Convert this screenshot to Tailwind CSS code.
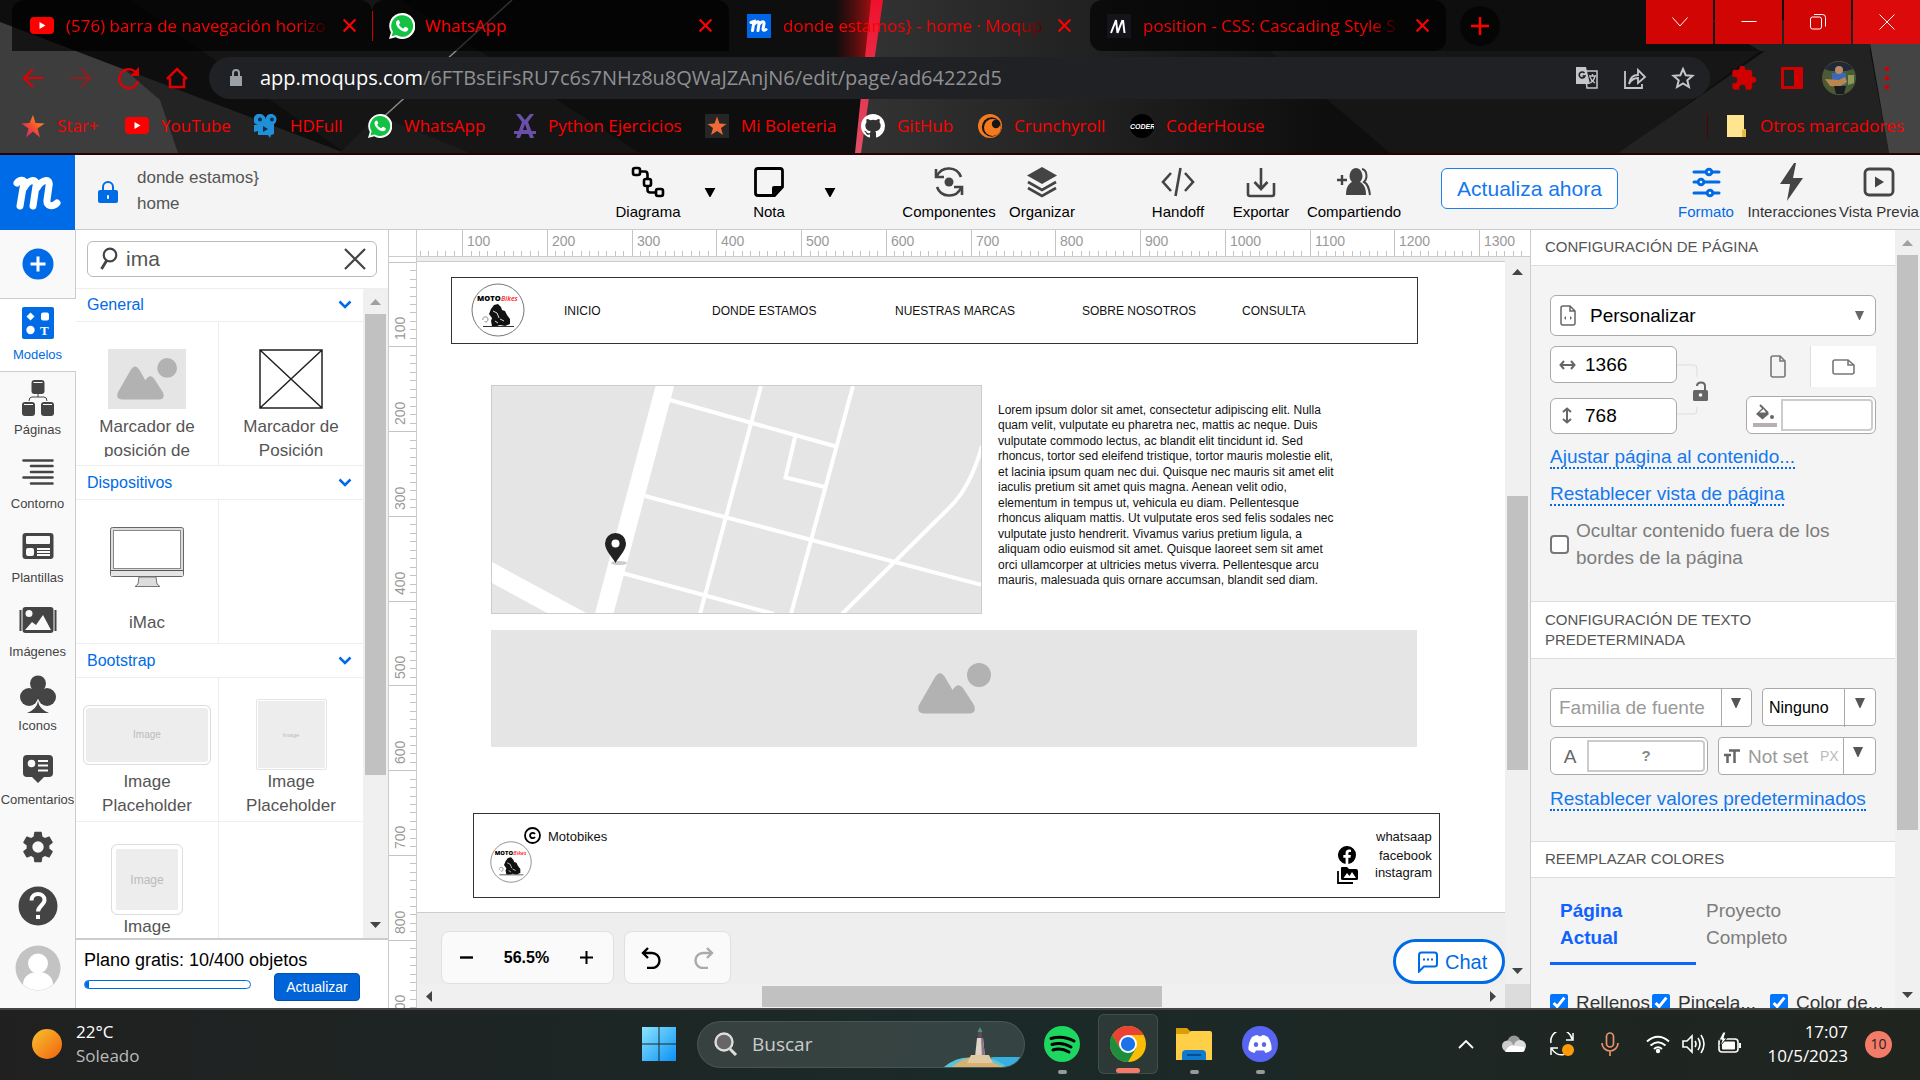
<!DOCTYPE html>
<html lang="es">
<head>
<meta charset="utf-8">
<meta name="viewport" content="width=device-width, initial-scale=1">
<title>donde estamos} - home · Moqups</title>
<script src="https://cdn.jsdelivr.net/npm/@tailwindcss/browser@4"></script>
</head>
<body class="flex h-screen flex-col overflow-hidden bg-[#eee] font-['Liberation_Sans',Arial,sans-serif] text-black">

<!-- Shared symbols -->
<svg class="hidden" aria-hidden="true">
  <symbol id="picture" viewBox="0 0 73 51">
    <path fill="#b2b2b2" d="M1 42 16.500 15Q22 5.500 27.500 15L34.500 27Q40 18.500 45 25L56 42Q59 50.500 51 50.500H7Q-2 50.500 1 42Z"/>
    <circle cx="61" cy="12" r="12" fill="#b2b2b2"/>
  </symbol>
  <symbol id="motologo" viewBox="0 0 54 54">
    <circle cx="27" cy="27" r="26" fill="#fff" stroke="#777" stroke-width="1"/>
    <text x="6" y="18" font-family="Open Sans" font-weight="800" font-size="7.500" fill="#000">MOTO</text>
    <text x="30" y="18" font-family="Open Sans" font-style="italic" font-weight="600" font-size="7" fill="#f22">Bikes</text>
    <path fill="#111" d="M20 26l3-4 4-1 3 3 1 3 3 1 2 4 3 4 0 5-5 2-5-1-3 1-5 0-1-5 1-3-3-4z"/>
    <path fill="none" stroke="#888" stroke-width="1" d="M12 37c-1-4 5-4 5-1s-3 4-3 2"/>
    <path stroke="#333" stroke-width="1" d="M12 43.500h31"/>
    <path fill="none" stroke="#ddd" stroke-width="1" d="M22 28l4 2 2 5M29 36l4 2M24 38l3 2"/>
  </symbol>
  <symbol id="wa" viewBox="0 0 24 24">
    <path fill="#fff" d="M12 0a12 12 0 0 0-10.200 18L0 24l6.200-1.700A12 12 0 1 0 12 0z"/>
    <path fill="#13c143" d="M12 2a10 10 0 0 0-8.400 15.300L2.500 21.500l4.300-1.100A10 10 0 1 0 12 2z"/>
    <path fill="#fff" d="M8.500 6.500c-.5 0-2 .8-2 2.700 0 3.500 4.800 8 8.300 8 2 0 3-1.200 3-2.700 0-.5-2.500-1.800-3-1.700-.5.200-1 1.500-1.500 1.500-1.200 0-4-2.600-4-3.700 0-.5 1-1 1-1.500s-1-2.600-1.800-2.600z"/>
  </symbol>
  <symbol id="yt" viewBox="0 0 24 24"><rect y="3" width="24" height="17" rx="4" fill="#f00"/><path fill="#fff" d="M9.500 8v7l6-3.500z"/></symbol>
  <symbol id="cross" viewBox="0 0 14 14"><path d="M1.500 1.500l11 11M12.500 1.500l-11 11" stroke="currentColor" stroke-width="2" fill="none"/></symbol>
  <symbol id="down" viewBox="0 0 12 10"><path d="M0 0h12L6.500 10h-1z" fill="currentColor"/></symbol>
  <symbol id="chev" viewBox="0 0 14 9"><path d="M1.500 1.500L7 7l5.500-5.500" stroke="#006be6" stroke-width="2.500" fill="none"/></symbol>
</svg>

<!-- Browser -->
<header class="relative shrink-0 overflow-hidden border-b-2 border-[#2a0003] bg-[#0e0e0e] font-['Open_Sans','Noto_Sans',sans-serif] text-[17px] leading-6 text-[#f00]">
  <svg class="absolute inset-0 h-full w-full" viewBox="0 0 1920 153" preserveAspectRatio="none" aria-hidden="true">
    <defs>
      <linearGradient id="glow"><stop offset="0" stop-color="#7a0b0b" stop-opacity="0"/><stop offset="1" stop-color="#a01010"/></linearGradient>
      <linearGradient id="mid"><stop offset="0" stop-color="#333"/><stop offset="1" stop-color="#0e0e0e"/></linearGradient>
      <linearGradient id="beam" x2="0" y2="1"><stop offset="0" stop-color="#f0102c"/><stop offset="1" stop-color="#e05068"/></linearGradient>
    </defs>
    <path fill="#1c1c1c" d="M130 0H400L640 153H345z" opacity=".5"/>
    <path fill="#232323" d="M0 22L345 153H0z"/>
    <path fill="#3d3d3d" d="M0 22L125 70 160 100 178 153H0z"/>
    <path stroke="#8a8a8a" stroke-width="1.500" d="M512 0L378 122"/>
    <path fill="#1c1c1c" d="M378 115L470 153H340z"/>
    <path fill="url(#mid)" d="M875 0H1330V153H860z"/>
    <path fill="url(#glow)" d="M835 0H872L868 57H835z"/>
    <path fill="url(#beam)" d="M871 0H883L861 153H855z"/>
    <path fill="#1d1d1d" d="M1270 51H1760L1620 153H1390z" opacity=".5"/>
    <path fill="#222" d="M1765 51H1870L1889 153H1618z"/>
    <path fill="#222" d="M1710 20H1870V51H1760z"/>
    <path fill="#444" d="M1866 20H1920V153H1889z"/>
  </svg>
  <div class="relative flex h-[51px] items-center">
    <div class="ml-3 flex h-full w-[360px] items-center rounded-t-xl bg-black/65 pl-[18px] pr-[15px]">
      <svg class="size-6"><use href="#yt"/></svg>
      <span class="ml-3 whitespace-nowrap bg-linear-to-r from-[#f00] from-90% to-[#300] bg-clip-text text-transparent">(576) barra de navegación horizo</span>
      <button class="ml-auto" aria-label="Cerrar"><svg class="size-[15px]"><use href="#cross"/></svg></button>
    </div>
    <div class="flex h-full w-[357px] items-center rounded-t-xl bg-black/65 pr-4">
      <span class="h-[30px] w-px bg-[#c00]"></span>
      <svg class="ml-4 size-[26px]"><use href="#wa"/></svg>
      <span class="ml-[10px]">WhatsApp</span>
      <button class="ml-auto" aria-label="Cerrar"><svg class="size-[15px]"><use href="#cross"/></svg></button>
    </div>
    <div class="flex h-full w-[361px] items-center pl-[18px] pr-[18px]">
      <svg class="size-6" viewBox="0 0 24 24"><rect width="24" height="24" fill="#0066e8"/><path fill="none" stroke="#fff" stroke-width="3" stroke-linecap="round" d="M4 8.500l3-1-1.500 9M7.500 10c2-3 5-3 4.500 0l-1 6.500M12.500 10c2-3 5-3 4.500 0l-1 5c0 1.500 2 1.500 3 .5"/></svg>
      <span class="ml-3 whitespace-nowrap bg-linear-to-r from-[#f00] from-90% to-[#500] bg-clip-text text-transparent">donde estamos} - home · Moqup</span>
      <button class="ml-auto" aria-label="Cerrar"><svg class="size-[15px]"><use href="#cross"/></svg></button>
    </div>
    <div class="flex h-full w-[356px] items-center rounded-xl bg-black/65 pl-[17px] pr-4">
      <svg class="size-6" viewBox="0 0 24 24"><rect width="24" height="24" fill="#15141a"/><path fill="none" stroke="#fff" stroke-width="2" d="M4 19L9 6l1.500 13L15.500 6M16 6l1.500 13M15 19"/></svg>
      <span class="ml-3 whitespace-nowrap bg-linear-to-r from-[#f00] from-90% to-[#300] bg-clip-text text-transparent">position - CSS: Cascading Style S</span>
      <button class="ml-auto" aria-label="Cerrar"><svg class="size-[15px]"><use href="#cross"/></svg></button>
    </div>
    <button class="ml-[14px] grid size-10 place-items-center rounded-full bg-black/60" aria-label="Nueva pestaña"><svg class="size-[18px]" viewBox="0 0 18 18"><path d="M9 0v18M0 9h18" stroke="#f00" stroke-width="2.500"/></svg></button>
    <div class="ml-auto flex gap-[2px] self-start">
      <button class="grid h-11 w-[67px] place-items-center bg-[#d20505]" aria-label="Buscar pestañas"><svg class="size-4" viewBox="0 0 16 16"><path d="M.5 3.500L8 12l7.500-8.500" stroke="#fff" fill="none"/></svg></button>
      <button class="grid h-11 w-[67px] place-items-center bg-[#d20505]" aria-label="Minimizar"><svg class="size-4" viewBox="0 0 16 16"><path d="M.5 7.500h15" stroke="#fff"/></svg></button>
      <button class="grid h-11 w-[67px] place-items-center bg-[#d20505]" aria-label="Restaurar"><svg class="size-4" viewBox="0 0 16 16"><rect x=".5" y="3" width="11" height="12" rx="2" fill="none" stroke="#fff"/><path d="M4 .5h8.500a3 3 0 0 1 3 3v9" fill="none" stroke="#fff"/></svg></button>
      <button class="grid h-11 w-[67px] place-items-center bg-[#dc0a0a]" aria-label="Cerrar ventana"><svg class="size-4" viewBox="0 0 16 16"><path d="M.5.5l15 15M15.500.5l-15 15" stroke="#fff"/></svg></button>
    </div>
  </div>
  <div class="relative flex h-[54px] items-center pl-[21px] pr-[21px]">
    <div class="flex items-center gap-6 text-[#e00000]">
      <button aria-label="Atrás"><svg class="size-6" viewBox="0 0 24 24"><path d="M22 12H3M12 3l-9 9 9 9" stroke="currentColor" stroke-width="2.200" fill="none"/></svg></button>
      <button class="opacity-50" aria-label="Adelante"><svg class="size-6" viewBox="0 0 24 24"><path d="M2 12h19M12 3l9 9-9 9" stroke="currentColor" stroke-width="2.200" fill="none"/></svg></button>
      <button aria-label="Recargar"><svg class="size-6" viewBox="0 0 24 24"><path d="M20 8a9.500 9.500 0 1 0 1 7" stroke="currentColor" stroke-width="2.400" fill="none"/><path d="M22 1v9h-9z" fill="currentColor"/></svg></button>
      <button aria-label="Inicio"><svg class="size-6" viewBox="0 0 24 24"><path d="M5 12v9h14v-9M2 13L12 3l10 10" stroke="currentColor" stroke-width="2.500" fill="none"/></svg></button>
    </div>
    <div class="ml-5 flex h-[42px] flex-1 items-center rounded-full bg-[#202124] pl-[18px] pr-[15px]">
      <svg class="h-[18px] w-[18px]" viewBox="0 0 18 18"><path d="M3 7h12v10H3z" fill="#9aa0a6"/><path d="M6 8V4a3 3 0 0 1 6 0v4" stroke="#9aa0a6" stroke-width="2" fill="none"/></svg>
      <div class="ml-[15px] flex-1 text-[20px] text-[#8f9092]" role="textbox" aria-label="Dirección"><span class="text-white">app.moqups.com</span>/6FTBsEiFsRU7c6s7NHz8u8QWaJZAnjN6/edit/page/ad64222d5</div>
      <div class="flex items-center gap-6 text-[#c4c6c8]">
        <button aria-label="Traducir"><svg class="size-6" viewBox="0 0 24 24"><path d="M10 5h12v17H12z" fill="none" stroke="currentColor" stroke-width="1.500"/><path d="M1 1h10l4 17H1z" fill="currentColor"/><path d="M9.500 7A3 3 0 1 0 10 10H7.500" stroke="#202124" stroke-width="1.600" fill="none"/><path d="M14 10h7M17.500 8v2M20 10c-1 4-3 6-5 7M15 11c1 3 3 5 5 6" stroke="currentColor" stroke-width="1.300" fill="none"/></svg></button>
        <button aria-label="Compartir"><svg class="size-6" viewBox="0 0 24 24"><path d="M2 5v17h17v-4" stroke="currentColor" stroke-width="1.800" fill="none"/><path d="M6 18c1-7 5-9 9-9V4l7 7-7 6v-5c-4 0-7 2-9 6z" stroke="currentColor" stroke-width="1.800" fill="none"/></svg></button>
        <button aria-label="Favorito"><svg class="size-6" viewBox="0 0 24 24"><path d="M12 3l2.700 6.200 6.800.6-5.200 4.500 1.600 6.700-5.900-3.600L6.100 21l1.600-6.700L2.500 9.800l6.800-.6z" stroke="currentColor" stroke-width="2" fill="none"/></svg></button>
      </div>
    </div>
    <div class="ml-5 flex items-center text-[#d00000]">
      <button aria-label="Extensiones"><svg class="size-7" viewBox="0 0 24 24"><path fill="currentColor" d="M20 11h-1V7c0-1-1-2-2-2h-4V4a2.500 2.500 0 0 0-5 0v1H4c-1 0-2 1-2 2v4h1.500a2.700 2.700 0 0 1 0 5.400H2V20c0 1 1 2 2 2h4v-1.500a2.700 2.700 0 0 1 5.400 0V22H17c1 0 2-1 2-2v-4h1a2.500 2.500 0 0 0 0-5z"/></svg></button>
      <button class="ml-[22px]" aria-label="Panel lateral"><svg class="size-6" viewBox="0 0 24 24"><path fill="currentColor" fill-rule="evenodd" d="M1 1h22v22H1zM4 4v16h10V4z"/></svg></button>
      <button class="ml-[18px]" aria-label="Perfil"><svg class="size-[34px]" viewBox="0 0 34 34"><circle cx="17" cy="17" r="17" fill="#4a5a34"/><path fill="#20283a" d="M3 8A17 17 0 0 1 31 8L24 10H8z"/><path fill="#3a68b8" d="M10 12h14v12H10z"/><circle cx="17" cy="9" r="4" fill="#b98a6a"/><path fill="#b98650" d="M3 18l14 1 6-3 2 5-8 5-9-1z"/><path fill="#1a1c22" d="M12 25h12l-2 8h-8z"/><path fill="#8c9a5a" d="M26 14l6 0 0 8-6 2z"/></svg></button>
      <button class="ml-[19px]" aria-label="Menú"><svg class="size-6" viewBox="0 0 24 24"><circle cx="12" cy="3" r="2.300" fill="currentColor"/><circle cx="12" cy="12" r="2.300" fill="currentColor"/><circle cx="12" cy="21" r="2.300" fill="currentColor"/></svg></button>
    </div>
  </div>
  <nav class="relative flex h-12 items-center pb-[6px] pl-[21px] pr-4" aria-label="Marcadores">
    <a href="#" class="flex w-[104px] items-center gap-3"><svg class="size-6 shrink-0" viewBox="0 0 24 24"><defs><linearGradient id="star" x1="0" y1="1" x2="1" y2="0"><stop offset="0" stop-color="#c81a8a"/><stop offset=".5" stop-color="#f5502a"/><stop offset="1" stop-color="#ffb030"/></linearGradient></defs><path fill="url(#star)" d="M12 1l2.500 8 9 .5-7 5 2.500 9-7-6-7 6 2.500-9-7-5 8-.5z"/></svg>Star+</a>
    <a href="#" class="flex w-[129px] items-center gap-3"><svg class="size-6 shrink-0"><use href="#yt"/></svg>YouTube</a>
    <a href="#" class="flex w-[114px] items-center gap-3"><svg class="size-6 shrink-0" viewBox="0 0 24 24"><path fill="#2090d8" d="M6 0a5.500 5.500 0 0 1 5.500 5A5.500 5.500 0 1 1 20 10v10l-3 1-1 3-2-3H4v-4l-4 1v-7h4A5.500 5.500 0 0 1 6 0z"/><circle cx="6" cy="5.500" r="2" fill="#0c3050"/><circle cx="18" cy="5.500" r="2" fill="#0c3050"/><path fill="#0c3050" d="M9 12v6l5-3z"/></svg>HDFull</a>
    <a href="#" class="flex w-[145px] items-center gap-3"><svg class="size-6 shrink-0"><use href="#wa"/></svg>WhatsApp</a>
    <a href="#" class="flex w-[192px] items-center gap-[11px]"><svg class="size-6 shrink-0" viewBox="0 0 24 24"><path fill="#6a4fa8" d="M3 0h4l5 6 5-6h4l-6 8 6 16h-4l-2-5H9l-2 5H3L9 8zM12 10l-2 6h4z"/><path fill="#6a4fa8" d="M1 17h22v3H1z"/></svg>Python Ejercicios</a>
    <a href="#" class="flex w-[156px] items-center gap-3"><svg class="size-6 shrink-0" viewBox="0 0 24 24"><rect width="24" height="24" fill="#262626"/><path fill="#f06a38" d="M12 2.500l2.500 7 7 .5-5.500 4 2 7-6-4-6 4 2-7L2.500 10l7-.5z"/></svg>Mi Boleteria</a>
    <a href="#" class="flex w-[117px] items-center gap-3"><svg class="size-6 shrink-0" viewBox="0 0 16 16"><path fill="#fff" d="M8 0C3.580 0 0 3.580 0 8c0 3.540 2.290 6.530 5.470 7.590.4.070.55-.17.55-.38 0-.19-.01-.82-.01-1.490-2.010.37-2.530-.49-2.690-.94-.09-.23-.48-.94-.82-1.130-.28-.15-.68-.52-.01-.53.63-.01 1.080.58 1.230.82.720 1.210 1.870.87 2.330.66.070-.52.280-.87.510-1.070-1.780-.2-3.640-.89-3.640-3.950 0-.87.310-1.590.82-2.150-.08-.2-.36-1.020.08-2.120 0 0 .67-.21 2.200.82a7.500 7.500 0 0 1 4 0c1.530-1.040 2.200-.82 2.200-.82.44 1.100.16 1.920.08 2.120.51.56.82 1.270.82 2.150 0 3.070-1.870 3.750-3.650 3.950.29.25.54.73.54 1.480 0 1.070-.01 1.930-.01 2.200 0 .21.15.46.55.38A8 8 0 0 0 16 8c0-4.420-3.580-8-8-8z"/></svg>GitHub</a>
    <a href="#" class="flex w-[152px] items-center gap-3"><svg class="size-6 shrink-0" viewBox="0 0 24 24"><circle cx="12" cy="12" r="12" fill="#f47a20"/><circle cx="13.500" cy="13" r="9.700" fill="#151515"/><circle cx="14.500" cy="13.500" r="8.500" fill="#f47a20"/><circle cx="18" cy="10" r="4.200" fill="#151515"/></svg>Crunchyroll</a>
    <a href="#" class="flex items-center gap-3"><svg class="size-6 shrink-0" viewBox="0 0 24 24"><circle cx="12" cy="12" r="12" fill="#000"/><text x="0" y="15" font-family="Liberation Sans Narrow, Liberation Sans" font-size="7" font-weight="700" font-style="italic" fill="#fff">CODER</text></svg>CoderHouse</a>
    <a href="#" class="ml-auto flex items-center border-l border-[#500] pl-[19px]"><svg class="h-[22px] w-[19px]" viewBox="0 0 19 22"><path fill="#ffe58f" d="M0 0h17v14l2 1v7H0z"/><path fill="#e8b93a" d="M15 15l4-1v8h-4z"/></svg><span class="ml-[14px]">Otros marcadores</span></a>
  </nav>
</header>

<!-- Moqups toolbar -->
<div class="flex h-[75px] shrink-0 border-b border-[#ccc] bg-[#f4f4f4] text-[15px] leading-[18px]">
  <button class="grid h-[75px] w-[75px] place-items-center bg-[#006be6]" aria-label="Moqups"><svg class="h-[34px] w-[50px]" viewBox="0 0 50 34"><path fill="none" stroke="#fff" stroke-width="7" stroke-linecap="round" stroke-linejoin="round" d="M4 7c2-3 7-4 7-1L7 30M11 12c4-8 13-11 12-2L20 30M24 12c4-8 14-11 12-2l-2 14c-1 7 6 7 10 3"/></svg></button>
  <div class="flex flex-1 items-center pl-[23px] text-[17px] leading-[26px] text-[#555]">
    <svg class="h-[22px] w-5" viewBox="0 0 20 22"><path fill="#006be6" d="M2 9h16q2 0 2 2v9q0 2-2 2H2q-2 0-2-2v-9q0-2 2-2z"/><path d="M5 10V6a5 5 0 0 1 10 0v4" stroke="#006be6" stroke-width="2" fill="none"/><rect x="9" y="14" width="2" height="4" rx="1" fill="#fff"/></svg>
    <div class="ml-[19px] pb-[2px]"><p>donde estamos}</p><p>home</p></div>
  </div>
  <button class="flex w-[66px] flex-col items-center pt-[10px]"><svg class="size-[34px]" viewBox="0 0 34 34" fill="none" stroke="#000" stroke-width="2.600"><rect x="2" y="3" width="7" height="7" rx="2"/><rect x="13" y="14" width="7" height="7" rx="2"/><rect x="25" y="24" width="7" height="7" rx="2"/><path d="M9 6.500h5q2.500 0 2.500 3V14M16.500 21v4q0 2.500 3 2.500H25"/></svg><span class="mt-[4px]">Diagrama</span></button>
  <button class="ml-4 w-6 pl-[7px]" aria-label="Más diagramas"><svg class="h-[9px] w-3"><use href="#down"/></svg></button>
  <button class="ml-6 flex w-12 flex-col items-center pt-[10px]"><svg class="size-[34px]" viewBox="0 0 34 34"><path d="M3.500 6q0-2.500 2.500-2.500h22q2.500 0 2.500 2.500v16l-8 8.500H6q-2.500 0-2.500-2.500z" fill="none" stroke="#000" stroke-width="2.800"/><path d="M20 31v-8q0-2 2-2h9z"/></svg><span class="mt-[4px]">Nota</span></button>
  <button class="ml-6 w-6 pl-[7px]" aria-label="Más notas"><svg class="h-[9px] w-3"><use href="#down"/></svg></button>
  <button class="ml-[60px] flex w-24 flex-col items-center pt-[10px]"><svg class="size-[34px]" viewBox="0 0 34 34" fill="none" stroke="#444" stroke-width="2.600"><circle cx="17" cy="17" r="4.500" fill="#444" stroke="none"/><path d="M5 11A13 13 0 0 1 29 12M29 23A13 13 0 0 1 5 22"/><path d="M4 4v8h8M30 30v-8h-8"/></svg><span class="mt-[4px]">Componentes</span></button>
  <button class="ml-[10px] flex w-[70px] flex-col items-center pt-[10px]"><svg class="size-[34px]" viewBox="0 0 34 34"><path d="M17 2l15 8.500L17 19 2 10.500z" fill="#444"/><path d="M3 17l14 8 14-8M3 23l14 8 14-8" fill="none" stroke="#444" stroke-width="2.600"/></svg><span class="mt-[4px]">Organizar</span></button>
  <button class="ml-[73px] flex w-14 flex-col items-center pt-[10px]"><svg class="size-[34px]" viewBox="0 0 34 34" fill="none" stroke="#444" stroke-width="2.600"><path d="M10 8l-8 9 8 9M24 8l8 9-8 9M19.500 3l-5 28"/></svg><span class="mt-[4px]">Handoff</span></button>
  <button class="ml-[25px] flex w-[60px] flex-col items-center pt-[10px]"><svg class="size-[34px]" viewBox="0 0 34 34" fill="none" stroke="#444" stroke-width="2.600"><path d="M17 3v20M10.500 17l6.500 7 6.500-7M4 18v11q0 2 2 2h22q2 0 2-2V18"/></svg><span class="mt-[4px]">Exportar</span></button>
  <button class="ml-[15px] flex w-24 flex-col items-center pt-[10px]"><svg class="size-[34px]" viewBox="0 0 34 34"><path d="M0 15h10M5 10v10" stroke="#444" stroke-width="2.400"/><path fill="#444" d="M19 3a7 8 0 0 1 4 14c4 2 6 6 6 13H9c0-7 2-11 6-13a7 8 0 0 1 4-14z"/><path fill="none" stroke="#444" stroke-width="2" d="M25 4c5 1 6 9 2 13 4 2 5 6 6 13"/></svg><span class="mt-[4px]">Compartiendo</span></button>
  <button class="ml-[39px] mt-[13px] h-[41px] w-[177px] whitespace-nowrap rounded-md border border-[#1a7ff0] bg-white text-[21px] leading-6 text-[#1478ee]">Actualiza ahora</button>
  <button class="ml-[58px] flex w-[60px] flex-col items-center pt-[10px] text-[#006be6]"><svg class="size-[34px]" viewBox="0 0 34 34" fill="#f4f4f4" stroke="#006be6" stroke-width="3" stroke-linecap="round"><path d="M5 7h25M5 17h25M5 28h25"/><circle cx="20" cy="7" r="2.800"/><circle cx="12" cy="17" r="2.800"/><circle cx="21" cy="28" r="2.800"/></svg><span class="mt-[4px]">Formato</span></button>
  <button class="ml-[10px] flex w-[92px] flex-col items-center pt-[8px] text-[#333]"><svg class="h-[38px] w-[30px]" viewBox="0 0 30 38"><path fill="#444" d="M17 0L3 21h10l-3 17 16-23H16l3-15z"/></svg><span class="mt-[2px]">Interacciones</span></button>
  <button class="flex w-[82px] flex-col items-center pt-[10px] text-[#333]"><svg class="size-[34px]" viewBox="0 0 34 34"><rect x="3" y="4" width="28" height="26" rx="4" fill="none" stroke="#444" stroke-width="2.800"/><path fill="#444" d="M13 11.500v11l9-5.500z"/></svg><span class="mt-[4px] whitespace-nowrap">Vista Previa</span></button>
</div>

<main class="flex min-h-0 flex-1">
  <!-- Rail -->
  <nav class="flex w-[76px] shrink-0 flex-col border-r border-[#ccc] bg-[#f9f9f9] text-[13px] leading-4 text-[#444]">
    <button class="grid h-[69px] w-[75px] shrink-0 place-items-center border-b border-[#ccc]" aria-label="Añadir"><svg class="size-8" viewBox="0 0 32 32"><circle cx="16" cy="16" r="15.500" fill="#006be6"/><path d="M16 8.500v15M8.500 16h15" stroke="#fff" stroke-width="3"/></svg></button>
    <button class="flex h-[73px] w-[76px] shrink-0 flex-col items-center gap-[5px] border-b border-[#ccc] bg-white pr-px pt-[5px] text-[#006be6]"><svg class="size-[38px]" viewBox="0 0 38 38"><rect x="3" y="3" width="32" height="32" rx="2" fill="#006be6"/><path fill="#fff" d="M11.500 8.500l4 4-4 4-4-4z"/><rect x="22" y="8.500" width="8" height="8" rx="2" fill="#fff"/><circle cx="11.500" cy="26" r="4.200" fill="#fff"/><text x="21" y="30.500" font-family="Liberation Serif" font-size="13" font-weight="700" fill="#fff">T</text></svg>Modelos</button>
    <button class="flex h-[74px] shrink-0 flex-col items-center gap-[5px] pt-[7px]"><svg class="size-[38px]" viewBox="0 0 38 38"><rect x="12.500" y="1" width="13" height="14" rx="3" fill="#444"/><rect x="3" y="23" width="13" height="14" rx="3" fill="#444"/><rect x="22" y="23" width="13" height="14" rx="3" fill="#444"/><path d="M14.500 3.500h9M5 25.500h9M24 25.500h9" stroke="#f9f9f9"/><path d="M19 15v3M10 22q0-4 3-4h12q3 0 3 4" stroke="#444" fill="none"/></svg>Páginas</button>
    <button class="flex h-[74px] shrink-0 flex-col items-center gap-[5px] pt-[7px]"><svg class="size-[38px]" viewBox="0 0 38 38"><path d="M4.500 7.500h29M12 13h21.500M12 19h21.500M4.500 24.500h29M12 30.500h21.500" stroke="#444" stroke-width="2.600" stroke-linecap="round"/></svg>Contorno</button>
    <button class="flex h-[74px] shrink-0 flex-col items-center gap-[5px] pt-[7px]"><svg class="size-[38px]" viewBox="0 0 38 38"><rect x="3.500" y="6" width="31" height="26" rx="3" fill="#444"/><g fill="#f9f9f9"><rect x="7" y="9" width="24" height="8" rx="1"/><rect x="7" y="21" width="8" height="8" rx="2"/><path d="M18 21h13v2H18zM18 24h13v2H18zM18 27h13v2H18z"/></g></svg>Plantillas</button>
    <button class="flex h-[74px] shrink-0 flex-col items-center gap-[5px] pt-[7px]"><svg class="size-[38px]" viewBox="0 0 38 38"><rect x="3.500" y="6" width="31" height="26" rx="3" fill="#444"/><path d="M1.500 9v21M36.500 9v21" stroke="#444" stroke-width="2"/><circle cx="10" cy="12.500" r="3.500" fill="#f9f9f9"/><path fill="#f9f9f9" d="M6 29l7-8 4 3 7-10 8 15z"/></svg>Imágenes</button>
    <button class="flex h-[74px] shrink-0 flex-col items-center gap-[5px] pt-[7px]"><svg class="size-[38px]" viewBox="0 0 38 38" fill="#444"><circle cx="19" cy="8.500" r="8"/><circle cx="10" cy="22" r="9"/><circle cx="28" cy="22" r="9"/><path d="M16 14h6v10h-6zM19 26q1 8 11 12H8q10-4 11-12z"/></svg>Iconos</button>
    <button class="flex h-[74px] shrink-0 flex-col items-center gap-[5px] whitespace-nowrap pt-[7px]"><svg class="size-[38px]" viewBox="0 0 38 38"><path fill="#444" d="M8 6h22q4 0 4 4v14q0 4-4 4h-5l-6 6-6-6H8q-4 0-4-4V10q0-4 4-4z"/><circle cx="12.500" cy="14.500" r="3.800" fill="#f9f9f9"/><path d="M19 12h10M19 16.500h10M19 21.500h10" stroke="#f9f9f9" stroke-width="2"/></svg>Comentarios</button>
    <button class="grid h-[62px] shrink-0 place-items-center" aria-label="Ajustes"><svg class="size-[38px]" viewBox="0 0 24 24"><path fill="#444" d="M19.140 12.940c.04-.3.060-.61.060-.94 0-.32-.02-.64-.07-.94l2.030-1.580c.18-.14.230-.41.120-.61l-1.920-3.320c-.12-.22-.37-.29-.59-.22l-2.390.96c-.5-.38-1.030-.7-1.620-.94l-.36-2.540c-.04-.24-.24-.41-.48-.41h-3.840c-.24 0-.43.17-.47.41l-.36 2.540c-.59.24-1.130.57-1.620.94l-2.390-.96c-.22-.08-.47 0-.59.22L2.740 8.870c-.12.21-.08.47.12.61l2.030 1.580c-.05.3-.09.63-.09.94s.02.64.07.94l-2.030 1.580c-.18.14-.23.41-.12.61l1.920 3.320c.12.22.37.290.59.22l2.390-.96c.5.38 1.030.7 1.620.94l.36 2.540c.05.24.24.41.48.41h3.840c.24 0 .44-.17.470-.41l.36-2.540c.59-.24 1.130-.56 1.620-.94l2.390.96c.22.08.47 0 .59-.22l1.920-3.320c.12-.22.070-.47-.12-.61l-2.010-1.580zM12 15.600A3.600 3.600 0 1 1 12 8.400a3.600 3.600 0 0 1 0 7.200z"/></svg></button>
    <button class="grid h-14 shrink-0 place-items-center" aria-label="Ayuda"><svg class="size-[40px]" viewBox="0 0 40 40"><circle cx="20" cy="20" r="19.500" fill="#444"/><path d="M13.500 14.500c0-9 13-8.500 13-.5 0 5-6.500 6-6.500 11.500" stroke="#fff" stroke-width="4" fill="none"/><path fill="#fff" d="M18 29h4v4h-4z"/></svg></button>
    <button class="grid h-[68px] shrink-0 place-items-center" aria-label="Cuenta"><svg class="size-[46px]" viewBox="0 0 46 46"><circle cx="23" cy="23" r="22.500" fill="#c3c3c3"/><circle cx="23" cy="18.500" r="10" fill="#fff"/><path fill="#fff" d="M8 39.500C8 32 14 28 19 27.500h8c5 .5 11 4.500 11 12A22.500 22.500 0 0 1 8 39.500z"/></svg></button>
  </nav>

  <!-- Stencils -->
  <section class="flex w-[313px] shrink-0 flex-col border-r border-[#ccc] bg-white">
    <div class="border-b border-[#eee] px-[11px] pb-[11px] pt-[11px]">
      <label class="flex h-9 items-center rounded-md border border-[#bbb] pl-3 pr-[10px]">
        <svg class="h-6 w-[18px]" viewBox="0 0 18 24"><circle cx="10" cy="8" r="6.300" fill="none" stroke="#444" stroke-width="2.200"/><path d="M7 13l-5.500 9" stroke="#444" stroke-width="2.800"/></svg>
        <input class="ml-2 w-0 flex-1 text-[21px] leading-7 text-[#555] outline-none" value="ima" aria-label="Buscar modelos">
        <button aria-label="Borrar"><svg class="size-[22px]" viewBox="0 0 22 22"><path d="M1 1l20 20M21 1L1 21" stroke="#444" stroke-width="2.200"/></svg></button>
      </label>
    </div>
    <div class="flex min-h-0 flex-1 text-[17px] leading-6 text-[#555]">
      <div class="flex-1 overflow-hidden">
        <button class="flex h-[33px] w-full items-center justify-between border-b border-[#eee] pb-px pl-[11px] pr-[11px] text-[16px] text-[#006be6]">General<svg class="h-[9px] w-[14px]"><use href="#chev"/></svg></button>
        <div class="grid h-[144px] grid-cols-[143px_1fr] border-b border-[#eee] text-center">
          <div class="flex flex-col items-center border-r border-[#eee] pt-[27px]"><div class="grid h-[60px] w-[78px] place-items-center bg-[#e5e5e5]"><svg class="h-[42px] w-[60px]"><use href="#picture"/></svg></div><div class="mt-[6px] h-[42px] w-[110px] overflow-hidden">Marcador de posición de</div></div>
          <div class="flex flex-col items-center pt-[27px]"><svg class="h-[60px] w-16" viewBox="0 0 64 60"><path d="M1 1h62v58H1zL63 59M63 1L1 59" fill="none" stroke="#222" stroke-width="1.500"/></svg><div class="mt-[6px] h-[42px] w-[110px] overflow-hidden">Marcador de Posición</div></div>
        </div>
        <button class="flex h-[34px] w-full items-center justify-between border-b border-[#eee] pl-[11px] pr-[11px] text-[16px] text-[#006be6]">Dispositivos<svg class="h-[9px] w-[14px]"><use href="#chev"/></svg></button>
        <div class="grid h-[144px] grid-cols-[143px_1fr] border-b border-[#eee] text-center">
          <div class="flex flex-col items-center border-r border-[#eee] pt-[27px]"><svg class="h-[60px] w-[74px]" viewBox="0 0 74 60"><rect x=".5" y=".5" width="73" height="49" rx="2" fill="#ddd" stroke="#666"/><rect x="3.500" y="3.500" width="67" height="38" fill="#fff" stroke="#888"/><path d="M1 43.500h72" stroke="#555"/><path d="M1 44h72v5H1z" fill="#e5e5e5"/><path fill="#ddd" stroke="#777" d="M29 50h17l1 7 3 2.500H25l3-2.500z"/></svg><div class="mt-6">iMac</div></div>
        </div>
        <button class="flex h-[34px] w-full items-center justify-between border-b border-[#eee] pl-[11px] pr-[11px] text-[16px] text-[#006be6]">Bootstrap<svg class="h-[9px] w-[14px]"><use href="#chev"/></svg></button>
        <div class="grid h-[144px] grid-cols-[143px_1fr] border-b border-[#eee] text-center">
          <div class="flex flex-col items-center border-r border-[#eee] pt-[27px]"><div class="grid h-[60px] w-32 place-items-center rounded-md border border-[#ddd] bg-[#ededed] text-[10px] text-[#bbb] ring-2 ring-inset ring-white">Image</div><div class="mt-[5px] w-[110px]">Image Placeholder</div></div>
          <div class="flex flex-col items-center pt-[21px]"><div class="grid size-[71px] place-items-center rounded-xs border border-[#e5e5e5] bg-[#ededed] text-[6px] text-[#bbb] ring-1 ring-inset ring-white">Image</div><div class="w-[110px]">Image Placeholder</div></div>
        </div>
        <div class="grid h-[144px] grid-cols-[143px_1fr] text-center">
          <div class="flex flex-col items-center border-r border-[#eee] pt-[22px]"><div class="grid h-[71px] w-[72px] place-items-center rounded-md border border-[#ddd] bg-[#ededed] text-[12px] text-[#bbb] ring-4 ring-inset ring-white">Image</div><div>Image</div></div>
        </div>
      </div>
      <div class="flex w-[25px] flex-col items-center bg-[#f0f0f0] py-[10px]">
        <svg class="h-[6px] w-[11px]" viewBox="0 0 11 6"><path fill="#a0a0a0" d="M0 6h11L5.500 0z"/></svg>
        <div class="mt-[9px] h-[461px] w-[21px] bg-[#c1c1c1]"></div>
        <svg class="mt-auto h-[6px] w-[11px] rotate-180" viewBox="0 0 11 6"><path fill="#444" d="M0 6h11L5.500 0z"/></svg>
      </div>
    </div>
    <div class="h-[70px] border-t-2 border-[#ccc] pl-2 pt-[9px]">
      <p class="text-[18px] leading-[22px]">Plano gratis: 10/400 objetos</p>
      <div class="flex items-center">
        <div class="mb-1 h-[9px] w-[167px] overflow-hidden rounded-full border border-[#006be6]"><div class="h-full w-1 bg-[#006be6]"></div></div>
        <button class="ml-[23px] mt-[2px] h-7 w-[86px] rounded-sm border border-[#0052b0] bg-[#0063d8] text-[14px] leading-5 text-white">Actualizar</button>
      </div>
    </div>
  </section>

  <!-- Workspace -->
  <section class="grid min-w-0 flex-1 grid-cols-[28px_minmax(0,1fr)_25px] grid-rows-[27px_minmax(0,1fr)_24px] bg-[#eee]">
    <div class="border-b border-r border-[#ccc] bg-white"></div>
    <svg id="ruler-x" class="col-span-2 h-full w-full overflow-hidden border-b border-[#ccc] bg-white" font-size="14" fill="#999"></svg>
    <svg id="ruler-y" class="row-span-2 h-full w-full overflow-hidden border-r border-[#ccc] bg-white" font-size="14" fill="#999"></svg>

    <div class="relative overflow-hidden">
      <div class="absolute inset-x-0 top-[4px] h-[652px] border-y border-[#ccc] bg-white"></div>
      <div class="absolute left-[34px] top-5 h-[67px] w-[967px] border border-[#333]"></div>
      <svg class="absolute left-[54px] top-[26px] size-[54px]"><use href="#motologo"/></svg>
      <a href="#" class="absolute left-[147px] top-[46px] text-[12px] leading-4 text-[#111]">INICIO</a>
      <a href="#" class="absolute left-[295px] top-[46px] text-[12px] leading-4 text-[#111]">DONDE ESTAMOS</a>
      <a href="#" class="absolute left-[478px] top-[46px] text-[12px] leading-4 text-[#111]">NUESTRAS MARCAS</a>
      <a href="#" class="absolute left-[665px] top-[46px] text-[12px] leading-4 text-[#111]">SOBRE NOSOTROS</a>
      <a href="#" class="absolute left-[825px] top-[46px] text-[12px] leading-4 text-[#111]">CONSULTA</a>
      <svg class="absolute left-[74px] top-[128px] h-[229px] w-[491px] border border-[#ccc] bg-[#e5e5e5]" viewBox="0 0 489 227">
        <g fill="none" stroke="#fff" stroke-width="4">
          <path d="M174.500-6L110.500 234" stroke-width="18"/>
          <path d="M178 14L344 60.500M153 110L490 199M130 187L282 228M269 0L208 228M361 0L299 228M303.500 49L293.500 91.500 333 101"/>
          <path d="M490 60Q480 96 462 117L350 228"/>
        </g>
        <path fill="#fff" d="M0 176L96 228H57L0 197z"/>
        <ellipse cx="127" cy="177" rx="8" ry="2" fill="#ccc"/>
        <path fill="#222" d="M123.500 147a10.500 10.500 0 0 1 10.500 10.500c0 7-7 13-10.500 19.500-3.500-6.500-10.500-12.500-10.500-19.500A10.500 10.500 0 0 1 123.500 147z"/>
        <circle cx="123.500" cy="157.500" r="4" fill="#fff"/>
      </svg>
      <p class="absolute left-[581px] top-[146px] whitespace-nowrap text-[12px] leading-[1.29] text-[#111]">Lorem ipsum dolor sit amet, consectetur adipiscing elit. Nulla<br>quam velit, vulputate eu pharetra nec, mattis ac neque. Duis<br>vulputate commodo lectus, ac blandit elit tincidunt id. Sed<br>rhoncus, tortor sed eleifend tristique, tortor mauris molestie elit,<br>et lacinia ipsum quam nec dui. Quisque nec mauris sit amet elit<br>iaculis pretium sit amet quis magna. Aenean velit odio,<br>elementum in tempus ut, vehicula eu diam. Pellentesque<br>rhoncus aliquam mattis. Ut vulputate eros sed felis sodales nec<br>vulputate justo hendrerit. Vivamus varius pretium ligula, a<br>aliquam odio euismod sit amet. Quisque laoreet sem sit amet<br>orci ullamcorper at ultricies metus viverra. Pellentesque arcu<br>mauris, malesuada quis ornare accumsan, blandit sed diam.</p>
      <div class="absolute left-[74px] top-[373px] grid h-[117px] w-[926px] place-items-center bg-[#e5e5e5]"><svg class="h-[51px] w-[73px]"><use href="#picture"/></svg></div>
      <div class="absolute left-[56px] top-[556px] h-[85px] w-[967px] border border-[#333]"></div>
      <svg class="absolute left-[73px] top-[584px] size-[42px]"><use href="#motologo"/></svg>
      <svg class="absolute left-[107px] top-[570px] size-[17px]" viewBox="0 0 17 17"><circle cx="8.500" cy="8.500" r="7.500" fill="#fff" stroke="#000" stroke-width="1.800"/><path d="M11 7a2.700 2.700 0 1 0 0 3" fill="none" stroke="#000" stroke-width="1.800"/></svg>
      <span class="absolute left-[131px] top-[572px] text-[13px] leading-4 text-[#111]">Motobikes</span>
      <a href="#" class="absolute left-[959px] top-[572px] text-[13px] leading-4 text-[#111]">whatsaap</a>
      <a href="#" class="absolute left-[962px] top-[591px] text-[13px] leading-4 text-[#111]">facebook</a>
      <a href="#" class="absolute left-[958px] top-[608px] text-[13px] leading-4 text-[#111]">instagram</a>
      <svg class="absolute left-[921px] top-[589px] size-[18px]" viewBox="0 0 24 24"><path d="M24 12a12 12 0 1 0-13.900 11.900v-8.400H7.100V12h3V9.400c0-3 1.800-4.700 4.500-4.700 1.300 0 2.700.2 2.700.2v3h-1.500c-1.500 0-2 .9-2 1.900V12h3.400l-.5 3.500h-2.900v8.400A12 12 0 0 0 24 12z"/></svg>
      <svg class="absolute left-[920px] top-[610px] h-[17px] w-[21px]" viewBox="0 0 21 17"><path d="M5 0h5l2 2h7q2 0 2 2v8q0 1-2 1H6q-2 0-2-1V1q0-1 1-1z"/><path d="M6.500 11l3.500-5 2.500 3L15 5l4 6z" fill="#fff"/><path d="M1 4v12h15" fill="none" stroke="#000" stroke-width="1.800"/></svg>

      <div class="absolute bottom-0 left-6 flex h-[53px] w-[173px] items-center justify-between rounded-lg border border-[#e0e0e0] bg-[#fafafa] pl-[18px] pr-5">
        <button aria-label="Alejar"><svg class="size-[13px]" viewBox="0 0 13 13"><path d="M0 6.500h13" stroke="#000" stroke-width="2.400"/></svg></button>
        <span class="text-[16px] font-bold leading-5">56.5%</span>
        <button aria-label="Acercar"><svg class="size-[13px]" viewBox="0 0 13 13"><path d="M0 6.500h13M6.500 0v13" stroke="#000" stroke-width="2"/></svg></button>
      </div>
      <div class="absolute bottom-0 left-[207px] flex h-[53px] w-[107px] items-center justify-between rounded-lg border border-[#e0e0e0] bg-[#fafafa] px-4">
        <button aria-label="Deshacer"><svg class="size-[22px]" viewBox="0 0 22 22"><path d="M7 1L2 6l5 5M2 6h9a7.500 7.500 0 0 1 0 15H6" fill="none" stroke="#000" stroke-width="2.400"/></svg></button>
        <button aria-label="Rehacer"><svg class="size-[22px]" viewBox="0 0 22 22"><path d="M15 1l5 5-5 5M20 6h-9a7.500 7.500 0 0 0 0 15h5" fill="none" stroke="#aaa" stroke-width="2.400"/></svg></button>
      </div>
      <button class="absolute bottom-0 right-0 flex h-[45px] w-[112px] items-center rounded-full border-3 border-[#006be6] bg-white pl-[21px] text-[20px] leading-6 text-[#006be6]"><svg class="mr-[6px] size-[22px]" viewBox="0 0 22 22"><path d="M2 20.500V4q0-2.500 2.500-2.500h13Q20 1.500 20 4v9q0 2.500-2.500 2.500H7z" fill="none" stroke="#006be6" stroke-width="2"/><path d="M6 8.500h2M10 8.500h2M14 8.500h2" stroke="#006be6" stroke-width="2"/></svg>Chat</button>
    </div>

    <div class="flex flex-col items-center bg-[#f0f0f0] pb-[10px] pt-3">
      <svg class="h-[6px] w-[11px]" viewBox="0 0 11 6"><path fill="#444" d="M0 6h11L5.500 0z"/></svg>
      <div class="mt-[221px] h-[274px] w-[21px] bg-[#c1c1c1]"></div>
      <svg class="mt-auto h-[6px] w-[11px] rotate-180" viewBox="0 0 11 6"><path fill="#444" d="M0 6h11L5.500 0z"/></svg>
    </div>
    <div class="flex items-center bg-[#f0f0f0] px-[9px]">
      <svg class="h-[11px] w-[6px]" viewBox="0 0 6 11"><path fill="#444" d="M6 0v11L0 5.500z"/></svg>
      <div class="ml-[330px] h-[21px] w-[400px] bg-[#c1c1c1]"></div>
      <svg class="ml-auto h-[11px] w-[6px]" viewBox="0 0 6 11"><path fill="#444" d="M0 0v11l6-5.500z"/></svg>
    </div>
    <div class="bg-[#dcdcdc]"></div>
  </section>

  <!-- Format panel -->
  <aside class="flex w-[390px] shrink-0 border-l border-[#ccc] bg-[#f4f4f4]">
    <div class="min-w-0 flex-1 overflow-hidden text-[19px] leading-[27px]">
      <h2 class="h-9 border-b border-[#ddd] bg-white pl-[14px] pt-[7px] text-[15px] leading-5 text-[#555]">CONFIGURACIÓN DE PÁGINA</h2>
      <div class="h-[335px] pl-[19px] pr-[19px] pt-[29px]">
        <div class="relative">
          <svg class="absolute left-[10px] top-[10px] h-[21px] w-4" viewBox="0 0 16 21" fill="none" stroke="#666" stroke-width="1.500"><path d="M3 1h7l5 5v12q0 2-2 2H3q-2 0-2-2V3q0-2 2-2zM10 1v5h5"/><path d="M6 11l-2 2 2 2zM10 11l2 2-2 2z" fill="#666" stroke="none"/></svg>
          <select class="h-[41px] w-full appearance-none rounded-md border border-[#aaa] bg-white pl-[39px]" aria-label="Tamaño de página"><option>Personalizar</option></select>
          <svg class="pointer-events-none absolute right-3 top-4 h-[9px] w-[9px] text-[#666]" viewBox="0 0 12 10" preserveAspectRatio="none"><path d="M0 0h12L6.500 10h-1z" fill="currentColor"/></svg>
        </div>
        <div class="mt-[10px] flex">
          <div class="flex flex-col gap-[15px]">
            <label class="flex h-[37px] w-[127px] items-center rounded-md border border-[#aaa] bg-white pl-2"><svg class="h-[10px] w-[17px]" viewBox="0 0 17 10"><path d="M5 1L1.500 5 5 9M12 1l3.500 4L12 9M2 5h13" fill="none" stroke="#666" stroke-width="2"/></svg><input class="ml-[9px] w-20 outline-none" value="1366" aria-label="Ancho"></label>
            <label class="flex h-[36px] w-[127px] items-center rounded-md border border-[#aaa] bg-white pb-px pl-[11px]"><svg class="h-[17px] w-[10px]" viewBox="0 0 10 17"><path d="M1 5l4-3.500L9 5M1 12l4 3.500L9 12M5 2v13" fill="none" stroke="#666" stroke-width="2"/></svg><input class="ml-[13px] w-20 outline-none" value="768" aria-label="Alto"></label>
          </div>
          <svg class="mt-[18px] h-[52px] w-8" viewBox="0 0 32 52"><path d="M0 1h17q3 0 3 4v8M0 50h17q3 0 3-4v-3" fill="none" stroke="#ddd"/><rect x="16" y="26" width="15" height="11" rx="1.500" fill="#666"/><path d="M20 22q0-3.500 4-3.500t4 3.500v4" fill="none" stroke="#666" stroke-width="2"/><circle cx="23.500" cy="31" r="1.800" fill="#fff"/></svg>
          <div class="ml-auto flex w-[130px] flex-col items-end gap-[9px]">
            <div class="flex w-full"><button class="grid h-[41px] flex-1 place-items-center" aria-label="Vertical"><svg class="h-[23px] w-4" viewBox="0 0 16 23" fill="none" stroke="#777" stroke-width="1.600"><path d="M3 1h7l5 5v14q0 2-2 2H3q-2 0-2-2V3q0-2 2-2zM10 1v5h5"/></svg></button><button class="grid h-[41px] w-[66px] place-items-center border-l border-[#ddd] bg-white" aria-label="Horizontal"><svg class="h-4 w-[23px]" viewBox="0 0 23 16" fill="none" stroke="#777" stroke-width="1.600"><path d="M3 1h13l6 5v7q0 2-2 2H3q-2 0-2-2V3q0-2 2-2zM16 1v5h6"/></svg></button></div>
            <div class="flex h-[38px] w-full items-center rounded-md border border-[#aaa] bg-white p-[2px]"><svg class="mx-[4px] h-6 w-6" viewBox="0 0 24 24"><path d="M3 11l7-6.500 6 6.500-6.500 5.500z" fill="#666"/><path d="M7 2l8 8" stroke="#666" stroke-width="2"/><path d="M6.500 9.500l4-3.500 2.500 3.500z" fill="#fff"/><circle cx="19" cy="14" r="2" fill="#666"/><path d="M0 20h24v4H0z" fill="#b8b0b0"/></svg><button class="h-full flex-1 rounded-r border-2 border-[#ccc] bg-white" aria-label="Color de fondo"></button></div>
          </div>
        </div>
        <p class="mt-[9px]"><a href="#" class="border-b-2 border-dotted border-[#006be6] text-[#1478ee]">Ajustar página al contenido...</a></p>
        <p class="mt-[10px]"><a href="#" class="border-b-2 border-dotted border-[#006be6] text-[#1478ee]">Restablecer vista de página</a></p>
        <label class="mt-[10px] flex items-center gap-[7px] text-[#7d7d7d]"><input type="checkbox" class="size-[19px] shrink-0 appearance-none rounded-sm border-2 border-[#777] bg-white"><span>Ocultar contenido fuera de los bordes de la página</span></label>
      </div>
      <h2 class="h-[58px] border-y border-[#ddd] bg-white pl-[14px] pt-[8px] text-[15px] leading-5 text-[#555]">CONFIGURACIÓN DE TEXTO<br>PREDETERMINADA</h2>
      <div class="h-[182px] pl-[19px] pr-[19px] pt-[29px]">
        <div class="flex justify-between">
          <div class="flex h-[39px] w-[202px] rounded-sm border border-[#aaa] bg-white"><input class="w-[170px] pl-[8px] outline-none placeholder:text-[#9a9a9a]" placeholder="Familia de fuente" aria-label="Familia de fuente"><button class="flex-1 border-l border-[#aaa] pb-[10px] pl-[9px] text-[#555]" aria-label="Elegir fuente"><svg class="size-[10px]" viewBox="0 0 12 10" preserveAspectRatio="none"><path d="M0 0h12L6.500 10h-1z" fill="currentColor"/></svg></button></div>
          <div class="relative"><select class="h-[38px] w-[114px] appearance-none rounded-sm border border-[#aaa] bg-white pl-[6px] text-[16px]" aria-label="Estilo"><option>Ninguno</option></select><span class="pointer-events-none absolute inset-y-0 right-0 grid w-8 place-items-center border-l border-[#aaa] pb-[10px] pr-[2px] text-[#555]"><svg class="size-[10px]" viewBox="0 0 12 10" preserveAspectRatio="none"><path d="M0 0h12L6.500 10h-1z" fill="currentColor"/></svg></span></div>
        </div>
        <div class="mt-[10px] flex justify-between">
          <div class="flex h-[38px] w-[158px] items-center rounded-md border border-[#aaa] bg-white p-[2px]"><span class="w-[34px] text-center text-[#666]">A</span><button class="h-full flex-1 rounded-r border-2 border-[#ccc] text-[15px] font-bold leading-5 text-[#888]" aria-label="Color del texto">?</button></div>
          <div class="flex h-[38px] w-[158px] items-center rounded-sm border border-[#aaa] bg-white"><svg class="ml-[5px] h-[14px] w-4" viewBox="0 0 16 14"><path d="M5 1.500h11M10.500 1v13M0 6h7M3.500 6v8" stroke="#666" stroke-width="2.500"/></svg><input class="ml-[8px] w-[72px] outline-none placeholder:text-[#9a9a9a]" placeholder="Not set" aria-label="Tamaño"><span class="w-[22px] text-[14px] leading-5 text-[#bbb]">PX</span><button class="ml-auto h-full w-8 border-l border-[#aaa] pb-2 pl-[9px] text-[#555]" aria-label="Elegir tamaño"><svg class="size-[10px]" viewBox="0 0 12 10" preserveAspectRatio="none"><path d="M0 0h12L6.500 10h-1z" fill="currentColor"/></svg></button></div>
        </div>
        <p class="mt-[10px] whitespace-nowrap"><a href="#" class="border-b-2 border-dotted border-[#006be6] text-[#1478ee]">Restablecer valores predeterminados</a></p>
      </div>
      <h2 class="h-[37px] border-y border-[#ddd] bg-white pl-[14px] pt-[7px] text-[15px] leading-5 text-[#555]">REEMPLAZAR COLORES</h2>
      <div class="pl-[19px] pt-[19px]">
        <div class="flex">
          <button class="h-[68px] w-[146px] border-b-3 border-[#0f62fe] pb-[11px] pl-[10px] pr-14 text-left font-bold leading-[27px] text-[#0f62fe]">Página Actual</button>
          <button class="h-[68px] w-[146px] pb-[14px] pl-[10px] pr-10 text-left leading-[27px] text-[#7d7d7d]">Proyecto Completo</button>
        </div>
        <div class="flex pt-[24px] text-[#333]">
          <label class="flex w-[102px] items-center gap-2 whitespace-nowrap"><input type="checkbox" checked class="size-[18px] shrink-0 accent-[#0075ff]">Rellenos</label>
          <label class="flex w-[118px] items-center gap-2 whitespace-nowrap"><input type="checkbox" checked class="size-[18px] shrink-0 accent-[#0075ff]">Pincela...</label>
          <label class="flex items-center gap-2 whitespace-nowrap"><input type="checkbox" checked class="size-[18px] shrink-0 accent-[#0075ff]">Color de...</label>
        </div>
      </div>
    </div>
    <div class="flex w-[25px] shrink-0 flex-col items-center bg-[#f0f0f0] py-[10px]">
      <svg class="h-[6px] w-[11px]" viewBox="0 0 11 6"><path fill="#a0a0a0" d="M0 6h11L5.500 0z"/></svg>
      <div class="mt-[9px] h-[575px] w-[21px] bg-[#c1c1c1]"></div>
      <svg class="mt-auto h-[6px] w-[11px] rotate-180" viewBox="0 0 11 6"><path fill="#444" d="M0 6h11L5.500 0z"/></svg>
    </div>
  </aside>
</main>

<!-- Taskbar -->
<footer class="flex h-[72px] shrink-0 items-center border-t-2 border-[#444] bg-linear-to-r from-[#202020] via-[#1a2a28] via-50% to-[#20241f] pb-[2px] font-['Open_Sans','Noto_Sans',sans-serif] text-[17px] leading-6 text-white">
  <button class="flex flex-1 items-center pl-8 text-left"><span class="size-[30px] rounded-full bg-linear-to-br from-[#f5c02e] to-[#f0600c]"></span><span class="ml-[14px]"><span class="block">22°C</span><span class="block text-[#bbb]">Soleado</span></span></button>
  <button aria-label="Inicio"><svg class="size-9" viewBox="0 0 36 36"><defs><linearGradient id="win" x2="1" y2="1"><stop offset="0" stop-color="#8be4ff"/><stop offset="1" stop-color="#0a92f5"/></linearGradient></defs><path fill="url(#win)" d="M1 1h16.500v16.500H1zM18.500 1H35v16.500H18.500zM1 18.500h16.500V35H1zM18.500 18.500H35V35H18.500z"/></svg></button>
  <label class="ml-[20px] flex h-[47px] w-[328px] items-center overflow-hidden rounded-full border border-white/10 bg-white/12 pl-4">
    <svg class="size-6" viewBox="0 0 24 24"><circle cx="10" cy="10" r="8.500" fill="#666" stroke="#ddd" stroke-width="2.400"/><path d="M16 17l6 6" stroke="#ddd" stroke-width="3"/></svg>
    <input class="ml-[14px] w-[150px] text-[19px] outline-none placeholder:text-[#ccc]" placeholder="Buscar" aria-label="Buscar">
    <svg class="ml-auto mr-1 h-10 w-[76px] self-end" viewBox="0 0 76 40"><path fill="#58c6d6" d="M0 40q16-13 36-8l40-2q-4 8-12 10z"/><path fill="#d8b070" d="M8 40q16-14 32-8l20 8z"/><path fill="#35b0e0" d="M46 30h30q-4 9-12 10z"/><path fill="#e0d4c8" d="M31 30l2-19h6l2 19z"/><path fill="#8a7490" d="M37 11h2l2 19h-3z"/><path fill="#5a4a58" d="M34 5h4v6h-4z"/><path fill="#489878" d="M36 0l2.500 5h-5z"/><path fill="#e0c8a0" d="M27 28h18l4 8H23z"/></svg>
  </label>
  <button class="relative ml-[19px] grid h-[60px] w-9 place-items-center" aria-label="Spotify"><svg class="size-9" viewBox="0 0 36 36"><circle cx="18" cy="18" r="18" fill="#1ed760"/><path d="M7 12.500q12-3.500 23 2.500M8 18.500q10-3 19 2.500M9 24q8-2.500 16 2" fill="none" stroke="#000" stroke-width="3" stroke-linecap="round"/></svg><span class="absolute bottom-0 h-1 w-[9px] rounded-full bg-[#999]"></span></button>
  <button class="relative ml-[18px] grid h-[60px] w-[60px] place-items-center rounded-md border border-white/10 bg-white/8" aria-label="Chrome"><svg class="size-9" viewBox="0 0 48 48"><circle cx="24" cy="24" r="24" fill="#fbbc05"/><path fill="#ea4335" d="M24 12h20.800A24 24 0 0 0 3.200 12L13.600 30z"/><path fill="#1e8e3e" d="M3.200 12A24 24 0 0 0 24 48L34.400 30 24 24 13.600 30z"/><circle cx="24" cy="24" r="12" fill="#fff"/><circle cx="24" cy="24" r="9.500" fill="#1a73e8"/></svg><span class="absolute bottom-0 h-[5px] w-6 rounded-full bg-[#f47b67]"></span></button>
  <button class="relative ml-[18px] grid h-[60px] w-9 place-items-center" aria-label="Explorador"><svg class="size-9" viewBox="0 0 36 36"><path fill="#d99e08" d="M0 2h11l4 4v6H0z"/><path fill="#ffcf48" d="M0 8h12l3-3h19q2 0 2 2v27H0z"/><path fill="#0f7ad0" d="M6 34v-6q0-4 4-4h16q4 0 4 4v6z"/><path d="M11 29h14" stroke="#0a4c90" stroke-width="2"/></svg><span class="absolute bottom-0 h-1 w-[9px] rounded-full bg-[#999]"></span></button>
  <button class="relative ml-[30px] mr-[5px] grid h-[60px] w-9 place-items-center" aria-label="Discord"><svg class="size-9" viewBox="0 0 36 36"><circle cx="18" cy="18" r="18" fill="#5865f2"/><path fill="#fff" d="M10 11q3-2 6-2l.6 1.200h2.800L20 9q3 0 6 2 4 6 3.500 13-3 2.500-6 3l-1.500-2.500h-8L12.500 27q-3-.5-6-3Q6 17 10 11z"/><ellipse cx="14" cy="18.500" rx="2.200" ry="2.500" fill="#5865f2"/><ellipse cx="22" cy="18.500" rx="2.200" ry="2.500" fill="#5865f2"/></svg><span class="absolute bottom-0 h-1 w-[9px] rounded-full bg-[#999]"></span></button>
  <div class="flex flex-1 items-center justify-end pr-7">
    <button aria-label="Iconos ocultos"><svg class="h-[10px] w-4" viewBox="0 0 16 10"><path d="M1 9l7-7 7 7" fill="none" stroke="#fff" stroke-width="1.800"/></svg></button>
    <svg class="ml-7 h-[18px] w-6" viewBox="0 0 24 18"><circle cx="12" cy="7" r="6.500" fill="#999"/><circle cx="5.500" cy="11" r="5.500" fill="#ccc"/><circle cx="18" cy="11" r="6" fill="#ddd"/><path fill="#fff" d="M3 17q4-9 11-6l8 1q2 5-2 5z"/></svg>
    <svg class="ml-6 size-6" viewBox="0 0 24 24"><path d="M1 11A10.500 10.500 0 0 1 22 7M23 1v7h-7M14 22.500A10.500 10.500 0 0 1 2 17M1 23v-7h7" fill="none" stroke="#fff" stroke-width="1.500"/><circle cx="18" cy="18" r="6" fill="#ff9a0a"/></svg>
    <svg class="ml-6 size-6" viewBox="0 0 24 24" fill="none" stroke="#e8916c" stroke-width="1.700"><rect x="8.500" y="1" width="7" height="14" rx="3.500"/><path d="M4 11a8 8 0 0 0 16 0M12 19v5"/></svg>
    <svg class="ml-6 size-6" viewBox="0 0 24 24" fill="none" stroke="#fff" stroke-width="2"><path d="M1 9.500q11-9.500 22 0M4.500 13.500q7.500-6.500 15 0M8 17q4-3.500 8 0"/><circle cx="12" cy="19" r="1.200" fill="#fff"/></svg>
    <svg class="ml-3 size-6" viewBox="0 0 24 24" fill="none" stroke="#fff" stroke-width="1.600"><path d="M1 9h4l5-5v16l-5-5H1zM13 9q2 3 0 6M16 6q4 6 0 12M19 3q6 9 0 18"/></svg>
    <svg class="ml-3 size-6" viewBox="0 0 24 24"><rect x="1" y="7" width="19" height="13" rx="3" fill="none" stroke="#fff" stroke-width="1.600"/><rect x="4" y="9.500" width="13" height="8" rx="1" fill="#fff"/><path d="M22 11v5" stroke="#fff" stroke-width="2"/><path fill="#fff" stroke="#1d2522" d="M5 0L1 8h3L2 14l7-8H6l2-6z"/></svg>
    <button class="ml-[25px] text-right"><span class="block">17:07</span><span class="block">10/5/2023</span></button>
    <span class="ml-[17px] grid size-[27px] place-items-center rounded-full bg-[#f47b67] text-[14px] leading-5 text-[#222]">10</span>
  </div>
</footer>

<script>
  // Ruler ticks: one every 10 page units, a full-length labelled one every 100.
  (function () {
    var NS = 'http://www.w3.org/2000/svg', step = 8.475;
    function add(svg, name, attrs, text) {
      var el = document.createElementNS(NS, name);
      for (var k in attrs) el.setAttribute(k, attrs[k]);
      if (text) el.textContent = text;
      svg.appendChild(el);
    }
    function draw(svg, origin, vertical, last) {
      for (var i = 0; i <= last; i++) {
        var p = Math.round(origin + i * step), major = i % 10 === 0;
        if (p < 0) continue;
        if (vertical) add(svg, 'rect', { x: major ? 0 : 21, y: p, width: 28, height: 1, fill: '#c4c4c4' });
        else add(svg, 'rect', { x: p, y: major ? 0 : 21, width: 1, height: 27, fill: '#c4c4c4' });
        if (major && i) {
          if (vertical) add(svg, 'text', { transform: 'translate(16 ' + (p - 6) + ') rotate(-90)' }, String(i * 10));
          else add(svg, 'text', { x: p + 5, y: 16 }, String(i * 10));
        }
      }
    }
    draw(document.getElementById('ruler-x'), -39.7, false, 136);
    draw(document.getElementById('ruler-y'), 4.6, true, 90);
  })();
</script>
</body>
</html>
